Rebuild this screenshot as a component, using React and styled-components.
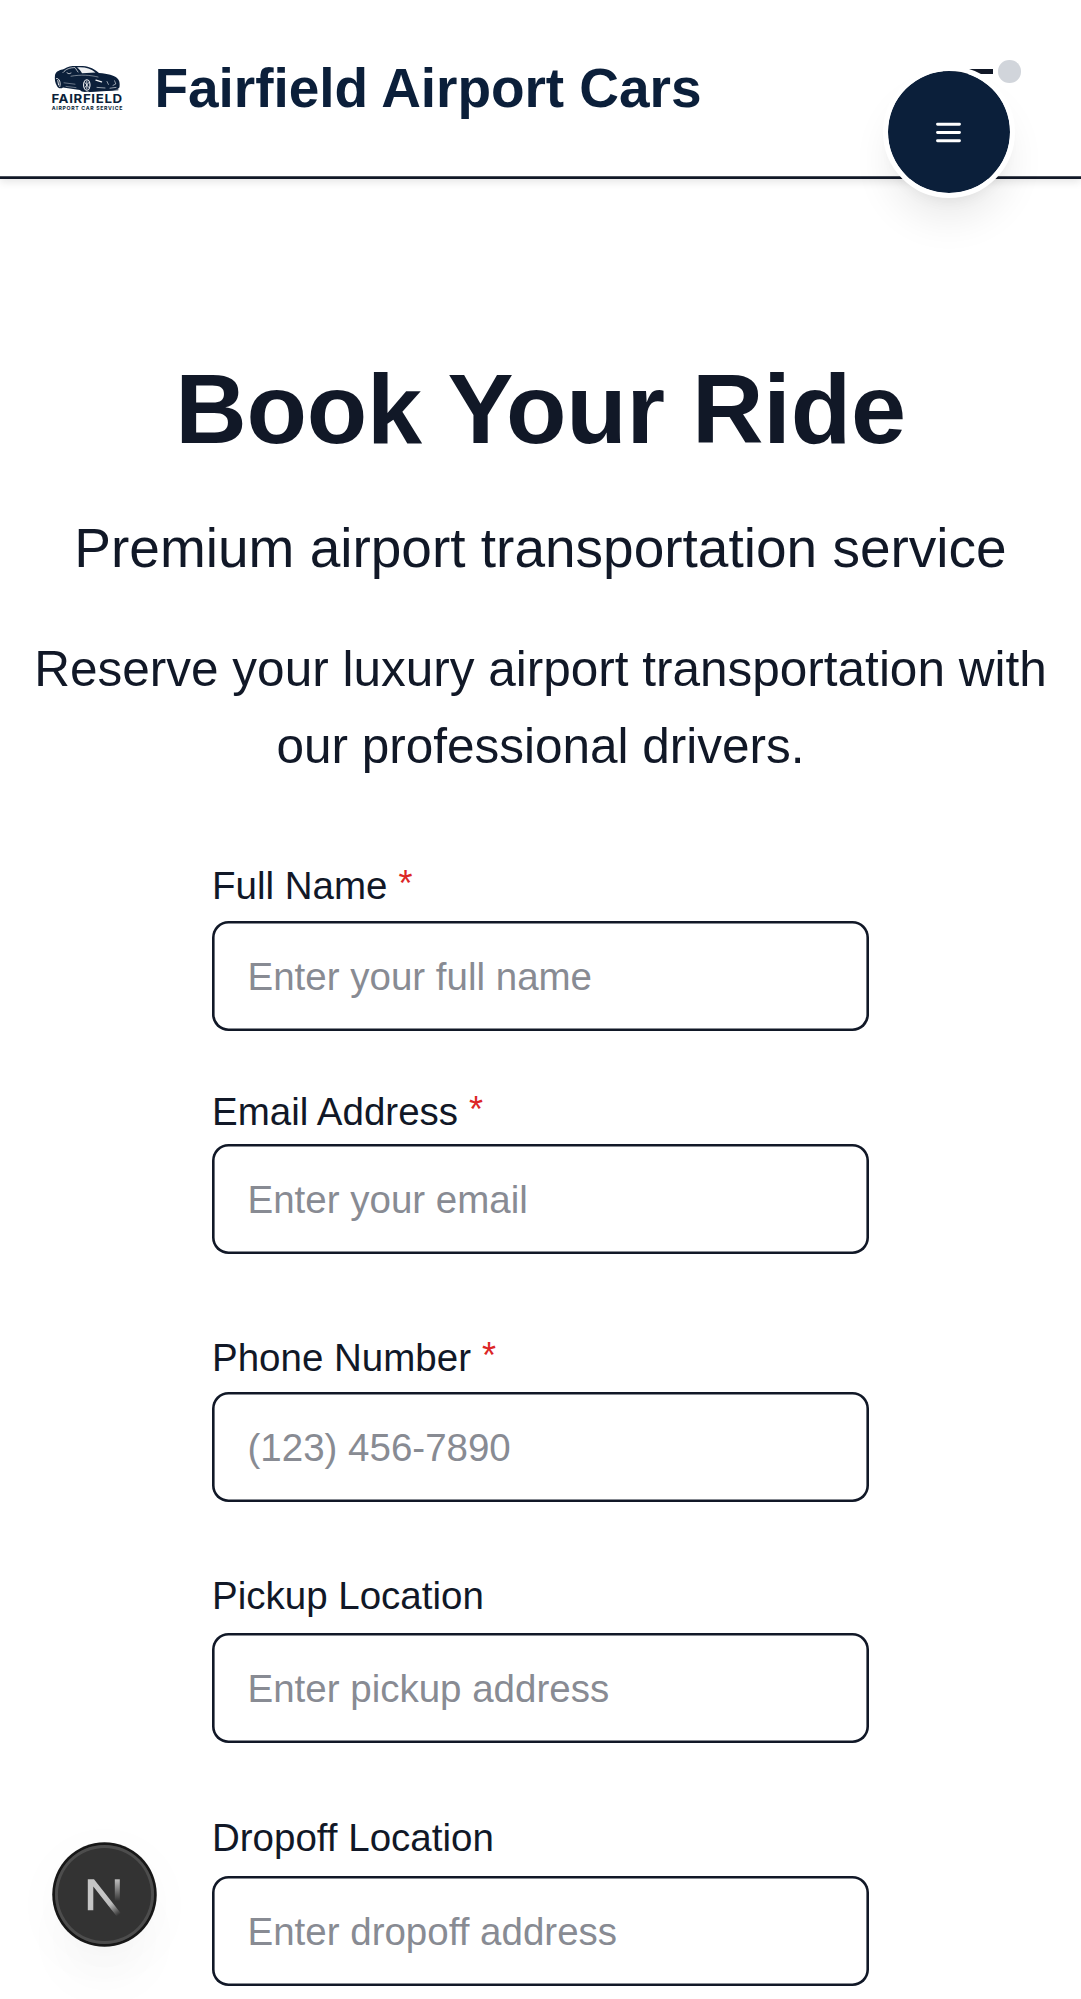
import React from "react";
import styled, { createGlobalStyle } from "styled-components";

const ink = "#111827";
const navy = "#0b1f3a";

const GlobalStyle = createGlobalStyle`
  *, *::before, *::after { box-sizing: border-box; }
  html, body { margin: 0; padding: 0; background: #fff; }
  body {
    font-family: "Liberation Sans", Arial, Helvetica, sans-serif;
    color: ${ink};
    overflow: hidden;
  }
`;

const Page = styled.div`
  position: relative;
  width: 100%;
  height: 1999px;
  overflow: hidden;
  display: flex;
  flex-direction: column;
  background: #fff;
`;

const Header = styled.header`
  flex: none;
  height: 178.75px;
  display: flex;
  align-items: center;
  justify-content: space-between;
  padding: 0 60px 2.75px 44px;
  background: #fff;
  box-shadow: inset 0 -2.75px 0 ${ink}, 0 2.75px 8px rgba(0, 0, 0, 0.1);
`;

const Brand = styled.div`
  display: flex;
  align-items: center;
  gap: 22.5px;
`;

const Logo = styled.svg`
  display: block;
  width: 88px;
  height: 88px;
`;

const BrandName = styled.span`
  font-size: 55px;
  line-height: 77px;
  font-weight: 700;
  letter-spacing: -0.05px;
  color: ${navy};
  white-space: nowrap;
`;

const Status = styled.div`
  display: flex;
  align-items: center;
  align-self: flex-start;
  gap: 5px;
  margin-top: 60px;
`;

const StatusBar = styled.span`
  width: 50px;
  height: 5.5px;
  background: ${ink};
`;

const StatusDot = styled.span`
  width: 22.6px;
  height: 22.6px;
  border-radius: 50%;
  background: #d1d5db;
`;

const MenuButton = styled.button`
  position: absolute;
  left: 882.5px;
  top: 65.5px;
  width: 132.5px;
  height: 132.5px;
  display: flex;
  align-items: center;
  justify-content: center;
  padding: 1px 0 0;
  border: 5.5px solid #fff;
  border-radius: 50%;
  background: ${navy};
  background-clip: padding-box;
  color: #fff;
  box-shadow: 0 27.5px 41px -8px rgba(0, 0, 0, 0.09), 0 11px 16px -11px rgba(0, 0, 0, 0.08);
`;

const Main = styled.main`
  display: flex;
  flex-direction: column;
  align-items: center;
  padding-top: 168px;
`;

const Title = styled.h1`
  margin: 0;
  font-size: 99px;
  line-height: 123.75px;
  font-weight: 700;
  letter-spacing: -0.2px;
`;

const Subtitle = styled.p`
  margin: 39px 0 0;
  font-size: 55px;
  line-height: 77px;
  white-space: nowrap;
`;

const Lead = styled.p`
  margin: 43px 0 0;
  width: 1040px;
  font-size: 49.5px;
  line-height: 77px;
  text-align: center;
`;

const Form = styled.form`
  width: 657px;
  margin-top: 74px;
  display: flex;
  flex-direction: column;
`;

const Field = styled.div`
  display: flex;
  flex-direction: column;
  margin-top: ${(p) => p.$above}px;
`;

const Label = styled.label`
  font-size: 38.5px;
  line-height: 55px;
  margin-bottom: ${(p) => p.$below}px;
`;

const Required = styled.span`
  margin-left: 11px;
  font-size: 36px;
  line-height: 1;
  vertical-align: 3px;
  color: #dc2626;
`;

const Input = styled.input`
  display: block;
  width: 100%;
  height: 110px;
  padding: 2px 36px 0 35.5px;
  border: 0;
  border-radius: 16.5px;
  outline: none;
  background: #fff;
  box-shadow: inset 0 0 0 2.6px ${ink};
  font-family: inherit;
  font-size: 38.5px;
  color: ${ink};

  &::placeholder {
    color: #888b93;
    opacity: 1;
  }
`;

const DevBadge = styled.div`
  position: absolute;
  left: 55px;
  top: 1844.5px;
  width: 99px;
  height: 99px;
  display: flex;
  align-items: center;
  justify-content: center;
  border-radius: 50%;
  background: #333;
  box-shadow: 0 0 0 2.75px #171717, inset 0 0 0 2.9px #4d4d4d,
    0 44px 66px -22px rgba(0, 0, 0, 0.07), 0 11px 60px rgba(0, 0, 0, 0.03);
`;

const fields = [
  { id: "name", label: "Full Name", required: true, placeholder: "Enter your full name", above: 0, below: 8.8 },
  { id: "email", label: "Email Address", required: true, placeholder: "Enter your email", above: 52.4, below: 5.2 },
  { id: "phone", label: "Phone Number", required: true, placeholder: "(123) 456-7890", above: 75.8, below: 7 },
  { id: "pickup", label: "Pickup Location", placeholder: "Enter pickup address", above: 66.6, below: 10.2 },
  { id: "dropoff", label: "Dropoff Location", placeholder: "Enter dropoff address", above: 66.8, below: 10.4 },
];

function BrandLogo() {
  return (
    <Logo viewBox="0 0 88 88" aria-label="Fairfield Airport Car Service">
      <path
        fill="#0b1f3a"
        d="M11 31 C12 27 16 26 20 25 C25 21.5 30 21.8 36 22 C44 22 48 23.5 55 29 C64 29.5 70 31.5 73 34 C75.5 36 76 39 75.5 43 C75 45 72 46 68 46.5 L44 47.5 C41 48.5 37 48 36 46 L19 43.5 C17 45 14 44.5 13 42 C11 39 10.5 35 11 31 Z"
      />
      <path fill="#eef0f2" d="M33 23.4 C41 22.8 46 24.4 51.5 28.4 L38 29.2 C37 27 35.5 25 33 23.4 Z" />
      <g fill="none" stroke="#f4f5f7" strokeLinecap="round">
        <path strokeWidth="0.7" d="M19 28.5 C22 25 26 23.6 31 23.6 L34 28 M23 28.8 L25 29.8 L27 29" />
        <path strokeWidth="0.45" d="M27 32.2 C37 30.5 46 31 54 33" />
        <path strokeWidth="0.9" d="M12.6 34.5 C15.5 34 17 39 15.8 42.6 M13.8 36.5 L14.6 41" />
        <ellipse cx="42.8" cy="41" rx="3.2" ry="5.3" strokeWidth="1.1" />
        <path strokeWidth="0.8" d="M42.8 37 V45 M40.9 38.5 L44.8 43.5 M44.8 38.5 L40.9 43.5" />
        <path strokeWidth="1.4" d="M52 36.2 L57.5 37.8" />
        <path strokeWidth="0.6" d="M63 37.5 L64.4 40.4 M70.6 36.8 L71.8 40 L69 41.4 M53 43.4 L61 44 M66 44.2 L72 43.4" />
        <path strokeWidth="0.4" d="M20 38.8 L31 40.2 M22 42.4 L32 43.6" />
      </g>
      <path stroke="#0b1f3a" strokeWidth="1" strokeLinecap="round" d="M45 47.6 L74 45.8" />
      <text
        x="7.4"
        y="59.2"
        fill="#0b1f3a"
        fontFamily="Inter, sans-serif"
        fontWeight="700"
        fontSize="12.2"
        textLength="71.4"
        lengthAdjust="spacingAndGlyphs"
        letterSpacing="0.6"
      >
        FAIRFIELD
      </text>
      <text
        x="7.8"
        y="65.9"
        fill="#0b1f3a"
        fontFamily="Inter, sans-serif"
        fontWeight="700"
        fontSize="5.2"
        textLength="70.6"
        lengthAdjust="spacing"
      >
        AIRPORT CAR SERVICE
      </text>
    </Logo>
  );
}

function MenuIcon() {
  return (
    <svg width="33" height="33" viewBox="0 0 24 24" fill="none" stroke="currentColor" strokeWidth="2.1" strokeLinecap="round">
      <path d="M4 6h16M4 12h16M4 18h16" />
    </svg>
  );
}

function DevMark() {
  return (
    <svg width="44" height="44" viewBox="0 0 44 44" fill="none">
      <defs>
        <linearGradient id="diagonal" x1="22" y1="22" x2="37" y2="42" gradientUnits="userSpaceOnUse">
          <stop offset="0" stopColor="#c6c6c6" />
          <stop offset="0.45" stopColor="#bdbdbd" />
          <stop offset="1" stopColor="#333" />
        </linearGradient>
        <linearGradient id="bar" x1="34" y1="7" x2="34" y2="29" gradientUnits="userSpaceOnUse">
          <stop offset="0" stopColor="#c2c2c2" />
          <stop offset="1" stopColor="#333" />
        </linearGradient>
      </defs>
      <rect x="31.8" y="7.3" width="5" height="23" fill="url(#bar)" />
      <path d="M4.8 7.3H11L39.2 43L35 46L10.3 14.6V38.3H4.8Z" fill="url(#diagonal)" />
    </svg>
  );
}

export default function App() {
  return (
    <>
      <GlobalStyle />
      <Page>
        <Header>
          <Brand>
            <BrandLogo />
            <BrandName>Fairfield Airport Cars</BrandName>
          </Brand>
          <Status>
            <StatusBar />
            <StatusDot />
          </Status>
        </Header>
        <Main>
          <Title>Book Your Ride</Title>
          <Subtitle>Premium airport transportation service</Subtitle>
          <Lead>Reserve your luxury airport transportation with our professional drivers.</Lead>
          <Form>
            {fields.map((f) => (
              <Field key={f.id} $above={f.above}>
                <Label htmlFor={f.id} $below={f.below}>
                  {f.label}
                  {f.required && <Required>*</Required>}
                </Label>
                <Input id={f.id} placeholder={f.placeholder} />
              </Field>
            ))}
          </Form>
        </Main>
        <MenuButton type="button" aria-label="Open menu">
          <MenuIcon />
        </MenuButton>
        <DevBadge>
          <DevMark />
        </DevBadge>
      </Page>
    </>
  );
}
